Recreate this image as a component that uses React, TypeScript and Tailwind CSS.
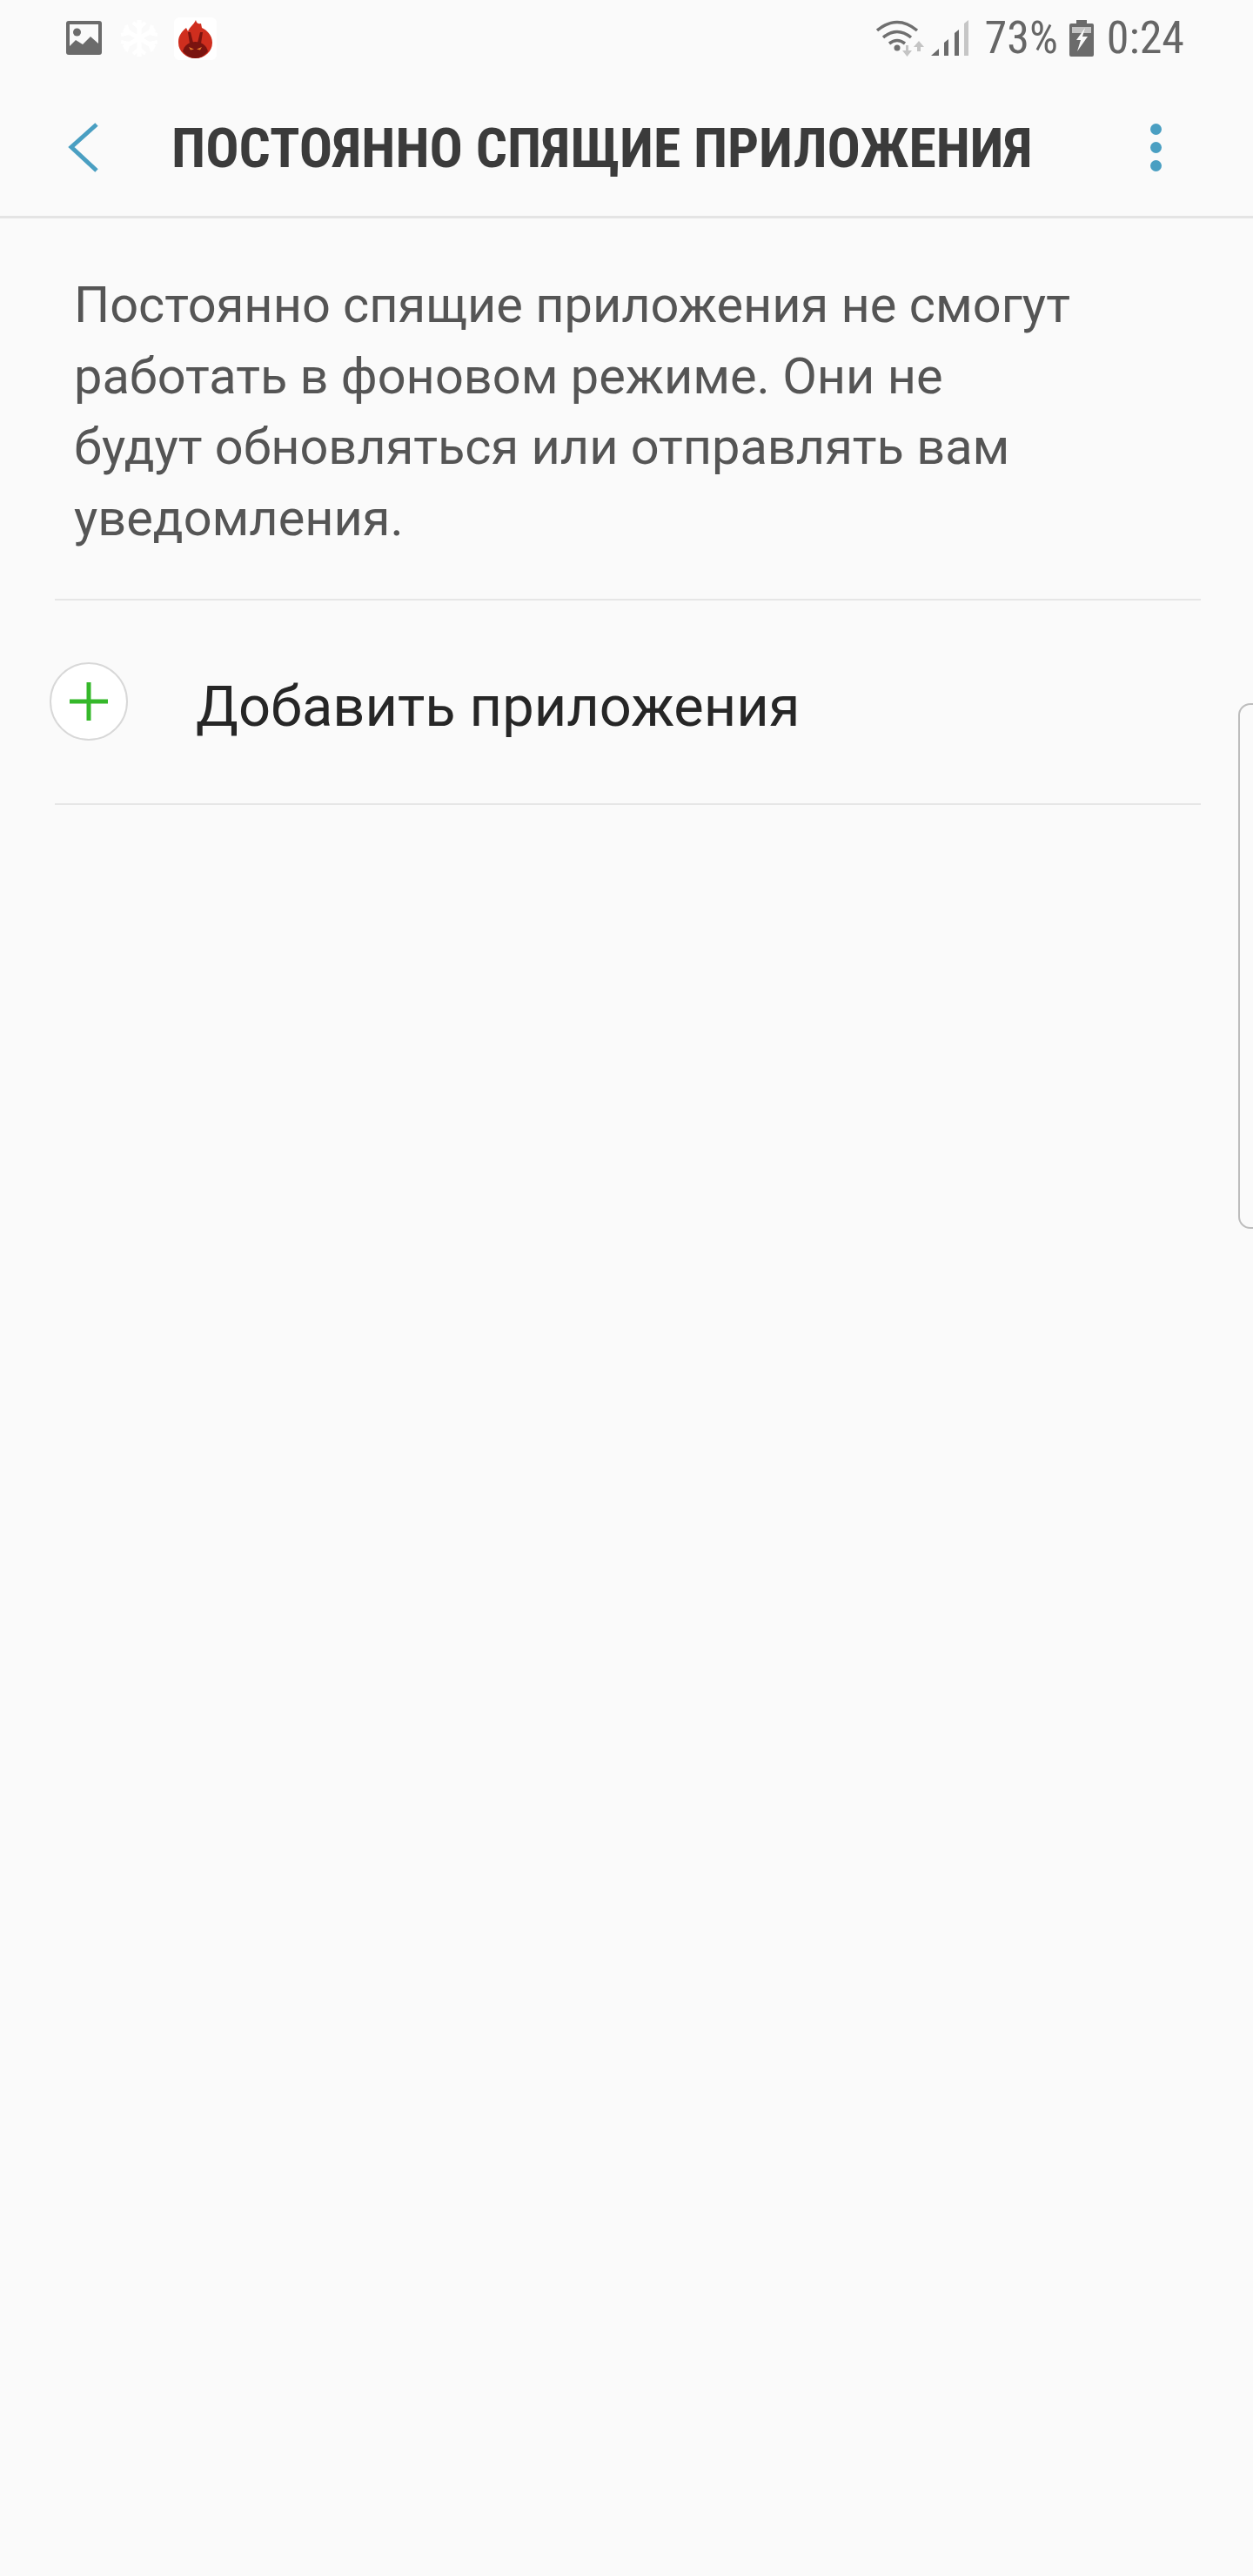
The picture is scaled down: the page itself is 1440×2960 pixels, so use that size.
import React from 'react';

const ImageIcon = () => (
  <svg width="42" height="40" viewBox="0 0 42 40" className="shrink-0">
    <rect width="41" height="39" rx="3" fill="#6b6b6b" />
    <rect x="4" y="4" width="33" height="31" fill="#fafafa" />
    <circle cx="12.500" cy="13" r="4.500" fill="#6b6b6b" />
    <path d="M4 29 L11 22 L19 27 L28 18 L37 26 V35 H4 Z" fill="#6b6b6b" />
  </svg>
);

const SnowIcon = () => (
  <svg width="44" height="44" viewBox="0 0 44 44" className="shrink-0" stroke="#ffffff" strokeWidth="5" fill="none">
    <path d="M22 1 V43 M4 11.500 L40 32.500 M4 32.500 L40 11.500" />
    <path d="M15 4 L22 10 L29 4 M15 40 L22 34 L29 40 M1 18 L10 16 L7 7 M43 26 L34 28 L37 37 M1 26 L10 28 L7 37 M43 18 L34 16 L37 7" strokeWidth="4" />
  </svg>
);

const AntutuIcon = () => (
  <div className="w-[49px] h-[49px] rounded-md bg-white flex items-center justify-center shrink-0">
    <svg width="41" height="45" viewBox="0 0 41 45">
      <path d="M1 26 C1 19 5 14 10 10 L12 14 C14 9 19 6 21 1 C22 5 24 6 27 5 L28 10 C33 12 40 18 40 27 A19.500 18 0 0 1 1 27 Z" fill="#cf2e1e" />
      <path d="M6 37 C8 30 13 26 20.500 26 C28 26 33 30 35 37 C31 42 26 45 20.500 45 C15 45 10 42 6 37 Z" fill="#7a1410" />
      <path d="M12 15 L15 15 L18 27 L14 28 Z M29 15 L26 15 L23 27 L27 28 Z" fill="#7a1410" />
      <path d="M13 32 L19 34.500 L15 35.500 Z M28 32 L22 34.500 L26 35.500 Z" fill="#e8792c" />
    </svg>
  </div>
);

const WifiIcon = () => (
  <svg width="56" height="44" viewBox="0 0 56 44" className="shrink-0" fill="none">
    <path d="M1 13 Q24 -6 47 13 M8 21 Q24 8 40 21 M15 28 Q24 21 33 28" stroke="#6f6f6f" strokeWidth="3.500" />
    <circle cx="24" cy="33" r="3.500" fill="#6f6f6f" />
    <path d="M34 30 h3 v6 h4 l-5.500 7 l-5.500 -7 h4 Z" fill="#c4c4c4" />
    <path d="M49 25 l6 7 h-4 v5 h-4 v-5 h-4 Z" fill="#c4c4c4" />
  </svg>
);

const SignalIcon = () => (
  <svg width="43" height="42" viewBox="0 0 43 42" className="shrink-0">
    <path d="M0 41 L9 33 V41 Z" fill="#6b6b6b" />
    <path d="M15 26 L20 22 V41 H15 Z" fill="#6b6b6b" />
    <path d="M27 15 L32 11 V41 H27 Z" fill="#6b6b6b" />
    <path d="M38 4 L43 0 V41 H38 Z" fill="#c6c6c6" />
  </svg>
);

const BatteryIcon = () => (
  <svg width="28" height="42" viewBox="0 0 28 42" className="shrink-0">
    <path d="M8 0 H20 V4 H26 Q28 4 28 6 V40 Q28 42 26 42 H2 Q0 42 0 40 V6 Q0 4 2 4 H8 Z" fill="#6b6b6b" />
    <rect x="3" y="8" width="22" height="7" fill="#c4c4c4" />
    <path d="M18 9 L8 23 H13 L9 36 L21 19 H15 Z" fill="#fafafa" />
  </svg>
);

const StatusBar = () => (
  <div className="h-[88px] pl-[76px] pr-[79px] flex items-center justify-between">
    <div className="flex items-center">
      <ImageIcon />
      <div className="ml-[20px] mr-[18px]">
        <SnowIcon />
      </div>
      <AntutuIcon />
    </div>
    <div className="flex items-center text-[52px] leading-none text-[#666666] [font-stretch:75%]">
      <WifiIcon />
      <div className="ml-[7px] mr-[19px]">
        <SignalIcon />
      </div>
      <span>73%</span>
      <div className="ml-[13px] mr-[15px]">
        <BatteryIcon />
      </div>
      <span>0:24</span>
    </div>
  </div>
);

const Dot = () => <div className="w-[13px] h-[13px] rounded-full bg-[#4a9fc2]" />;

const Header = () => (
  <div className="h-[163px] pl-[78px] pr-[105px] pt-[4px] flex items-center border-b-[3px] border-[#e4e4e4]">
    <svg width="36" height="58" viewBox="0 0 36 58" className="shrink-0" fill="none" stroke="#4a9fc2" strokeWidth="5">
      <path d="M33 2 L4 28 L33 55" />
    </svg>
    <h1 className="ml-[83px] pt-[2px] flex-1 text-[63.700px] leading-none font-bold text-[#3b3b3b] whitespace-nowrap [font-stretch:75%]">
      ПОСТОЯННО СПЯЩИЕ ПРИЛОЖЕНИЯ
    </h1>
    <div className="flex flex-col gap-[8px] -mt-[2px]">
      <Dot />
      <Dot />
      <Dot />
    </div>
  </div>
);

export default function App() {
  return (
    <div className="relative w-[1440px] h-[2960px] overflow-hidden bg-[#fafafa] font-['Roboto','Noto_Sans',sans-serif]">
      <StatusBar />
      <Header />

      <div className="ml-[63px] mr-[60px] pt-[59px]">
        <p className="pl-[22px] pb-[51px] text-[57.700px] leading-[81.700px] text-[#555555] whitespace-nowrap border-b-2 border-[#e6e6e6]">
          Постоянно спящие приложения не смогут<br />
          работать в фоновом режиме. Они не<br />
          будут обновляться или отправлять вам<br />
          уведомления.
        </p>
        <div className="h-[235px] flex items-center border-b-2 border-[#e6e6e6]">
          <div className="-ml-[6px] w-[90px] h-[90px] rounded-full border-2 border-[#d8d8d8] flex items-center justify-center bg-white shrink-0">
            <svg width="44" height="44" viewBox="0 0 44 44" stroke="#35b82a" strokeWidth="5">
              <path d="M22 0 V44 M0 22 H44" />
            </svg>
          </div>
          <span className="ml-[78px] pt-[12px] text-[65px] leading-none text-[#262626] whitespace-nowrap">Добавить приложения</span>
        </div>
      </div>

      {/* edge panel handle */}
      <div className="absolute left-[1423px] top-[808px] w-[20px] h-[604px] rounded-l-[14px] border-2 border-[#bdbdbd]" />
    </div>
  );
}
